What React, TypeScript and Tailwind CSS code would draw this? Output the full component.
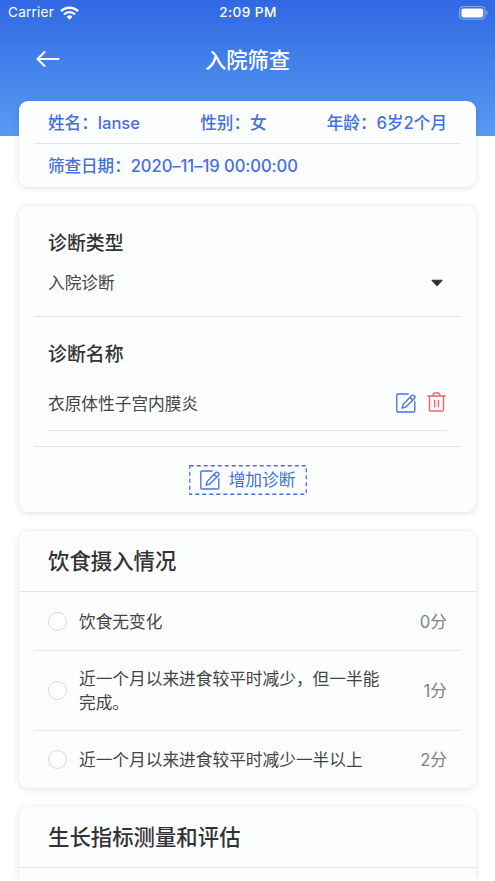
import { FC, ReactNode } from "react";

const Card: FC<{ className?: string; children?: ReactNode }> = ({ className = "", children }) => (
  <section className={`ml-[19px] w-[457px] shrink-0 rounded-[9px] bg-[#fcfdff] shadow-[0_1px_6px_rgba(40,50,90,0.15)] ${className}`}>
    {children}
  </section>
);

const EditIcon: FC = () => (
  <svg width="20" height="20" viewBox="0 0 20 20" fill="none" stroke="#4a72e3" strokeWidth="1.35" strokeLinecap="round" strokeLinejoin="round">
    <path d="M12.2 1H2A1.2 1.2 0 0 0 .8 2.2v15.6A1.2 1.2 0 0 0 2 19h15.6a1.2 1.2 0 0 0 1.2-1.2V8.4" />
    <path d="M6.2 15.2l.8-3.6 8.5-8.9a1.7 1.7 0 0 1 2.5-.1l.4.4a1.7 1.7 0 0 1 0 2.4l-8.8 8.8z" />
    <path d="M14 4.4l2.7 2.7" />
  </svg>
);

const TrashIcon: FC = () => (
  <svg width="19" height="20" viewBox="0 0 19 20" fill="none" stroke="#f0666a" strokeWidth="1.45" strokeLinecap="round" strokeLinejoin="round">
    <path d="M.9 3.9h17.2M6 3.7l.5-1.7A1.3 1.3 0 0 1 7.7 1h3.6a1.3 1.3 0 0 1 1.2 1l.5 1.7" />
    <path d="M2.5 4v13.7A1.3 1.3 0 0 0 3.8 19h11.4a1.3 1.3 0 0 0 1.3-1.3V4M7.7 8.4v6.4M11.4 8.4v6.4" />
  </svg>
);

const StatusBar: FC = () => (
  <div className="grid h-[26px] grid-cols-3 items-center pl-[8px] pr-[7px] text-[13.6px] leading-none">
    <div className="flex items-center gap-[6px]">
      <span className="tracking-[0.2px]">Carrier</span>
      <svg width="19" height="14" viewBox="0 0 18 13" fill="none" stroke="#fff" strokeWidth="2.2">
        <path d="M.9 4.8a11.6 11.6 0 0 1 16.2 0M3.8 7.8a7.4 7.4 0 0 1 10.4 0" />
        <path d="M9 12.8L6.2 10a4 4 0 0 1 5.6 0z" fill="#fff" stroke="none" />
      </svg>
    </div>
    <span className="text-center font-medium tracking-[0.4px]">2:09 PM</span>
    <svg className="justify-self-end" width="29" height="14" viewBox="0 0 29 14">
      <rect x=".6" y=".6" width="25.4" height="12.6" rx="3.4" fill="none" stroke="#fff" strokeOpacity=".45" />
      <rect x="2.4" y="2.4" width="21.8" height="9" rx="1.8" fill="#fff" />
      <path d="M27.3 4.8a2.4 2.4 0 0 1 0 4.2z" fill="#fff" fillOpacity=".5" />
    </svg>
  </div>
);

const App: FC = () => {
  const options = [
    { label: "饮食无变化", score: "0分", height: "h-[58px]" },
    { label: "近一个月以来进食较平时减少，但一半能完成。", score: "1分", height: "h-[79px]" },
    { label: "近一个月以来进食较平时减少一半以上", score: "2分", height: "h-[57px]" },
  ];

  return (
    <div className="flex h-[879px] w-[495px] flex-col overflow-hidden bg-white font-[Inter,'Noto_Sans_CJK_SC',sans-serif] text-[16.7px] leading-6 text-[#444]">
      <header className="h-[136px] shrink-0 bg-linear-to-b from-[#3268e4] to-[#589bf1] text-white">
        <StatusBar />
        <div className="grid h-[66px] grid-cols-[1fr_auto_1fr] items-center px-[36px]">
          <svg width="24" height="18" viewBox="0 0 24 18" fill="none" stroke="#fff" strokeWidth="1.9" strokeLinecap="round" strokeLinejoin="round">
            <path d="M22.6 9H1.6M8.6 2L1.4 9l7.2 7" />
          </svg>
          <h1 className="pt-[2px] text-[21.3px] font-medium">入院筛查</h1>
        </div>
      </header>

      <Card className="-mt-[35px] h-[86px] px-[15px] text-[16.6px] font-medium text-[#476fdd]">
        <div className="flex h-[43px] items-center justify-between border-b border-[#e3e5ea] px-[14px] pt-px">
          <span>姓名：lanse</span>
          <span>性别：女</span>
          <span>年龄：6岁2个月</span>
        </div>
        <div className="flex h-[43px] items-center px-[14px] tracking-[-0.06px]">筛查日期：2020–11–19 00:00:00</div>
      </Card>

      <Card className="mt-[19px] h-[306px] px-[15px]">
        <div className="h-[111px] border-b border-[#e1e3e7] px-[14px] pt-[26px]">
          <h2 className="text-[18.9px] font-medium text-[#333]">诊断类型</h2>
          <div className="mt-[15px] flex items-center justify-between">
            <span>入院诊断</span>
            <svg className="mr-[4px]" width="12" height="8" viewBox="0 0 11 7" fill="#2e3032" stroke="#2e3032" strokeLinejoin="round">
              <path d="M1 1h9L5.5 6z" />
            </svg>
          </div>
        </div>
        <div className="h-[130px] border-b border-[#e1e3e7] px-[14px] pt-[26px]">
          <h2 className="text-[18.9px] font-medium text-[#333]">诊断名称</h2>
          <div className="mt-[10px] flex h-[54px] items-center border-b border-[#e1e3e7]">
            <span className="flex-1">衣原体性子宫内膜炎</span>
            <span className="mb-px"><EditIcon /></span>
            <span className="mb-[3px] ml-[11px] mr-px"><TrashIcon /></span>
          </div>
        </div>
        <button className="relative mx-auto mt-[18px] flex h-[30px] w-[118px] items-center justify-center gap-[9px] text-[#476fdd]">
          <svg className="absolute inset-0" width="118" height="30" fill="none" stroke="#4a6fe3" strokeWidth="1.3" strokeDasharray="4 3">
            <rect x=".75" y=".75" width="116.5" height="28.5" />
          </svg>
          <EditIcon />
          <span>增加诊断</span>
        </button>
      </Card>

      <Card className="mt-[19px] h-[257px]">
        <h2 className="flex h-[61px] items-center border-b border-[#e3e6ea] px-[29px] text-[21.4px] font-medium text-[#333]">饮食摄入情况</h2>
        <div className="divide-y divide-[#e6e8eb] px-[15px]">
          {options.map(({ label, score, height }) => (
            <label key={score} className={`box-content flex items-center px-[14px] ${height}`}>
              <span className="size-[19px] shrink-0 rounded-full border-[1.5px] border-[#d9dbe1] bg-white" />
              <span className="ml-3 w-[304px] pt-px">{label}</span>
              <span className="ml-auto pt-px text-[#808285]">{score}</span>
            </label>
          ))}
        </div>
      </Card>

      <Card className="mt-[19px] h-[257px]">
        <h2 className="flex h-[61px] items-center border-b border-[#e3e6ea] px-[29px] text-[21.4px] font-medium text-[#333]">生长指标测量和评估</h2>
      </Card>
    </div>
  );
};

export default App;
